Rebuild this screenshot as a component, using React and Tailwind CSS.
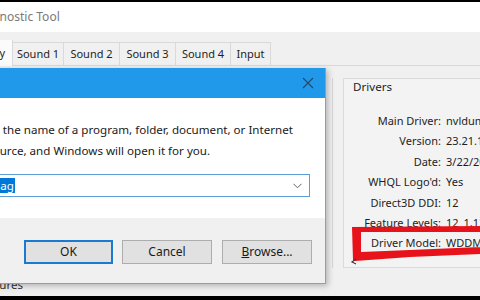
import React from "react";

const rows = [
  ["Main Driver:", "nvldumdx.dll"],
  ["Version:", "23.21.13.9124"],
  ["Date:", "3/22/2018"],
  ["WHQL Logo'd:", "Yes"],
  ["Direct3D DDI:", "12"],
  ["Feature Levels:", "12_1,12_0"],
  ["Driver Model:", "WDDM 2.3"],
];

const tabs = [
  ["Sound 1", "w-[51px]"],
  ["Sound 2", "w-[56px]"],
  ["Sound 3", "w-[56px]"],
  ["Sound 4", "w-[55px]"],
  ["Input", "w-[40px]"],
];

function RunDialog() {
  return (
    <div className="absolute top-[68px] left-[-60px] w-[386px] h-[216px] flex flex-col border-r border-b border-[#6aa9e0] shadow-[2px_2px_6px_rgba(0,0,0,0.25)] bg-white">
      <div className="h-[30px] bg-[#2199ea] flex items-center justify-end pr-[11px] shrink-0">
        <svg width="12" height="12" viewBox="0 0 12 12">
          <path d="M1 1 L11 11 M11 1 L1 11" stroke="#244868" strokeWidth="1.1" fill="none" />
        </svg>
      </div>
      <div className="h-[120px] bg-white shrink-0 pt-[21px] pl-[36px] text-[11.6px] leading-[21px] text-[#1a1a1a] whitespace-nowrap">
        <p className="ml-[-2px]">Type the name of a program, folder, document, or Internet</p>
        <p>resource, and Windows will open it for you.</p>
        <div className="mt-[13px] w-[330px] ml-[4px] h-[23px] border border-[#5e9fda] flex items-center justify-between pr-[7px]">
          <span className="ml-[-5px] bg-[#0078d7] text-white leading-[15px] px-[1px]">dxdiag</span>
          <svg width="9" height="6" viewBox="0 0 9 6">
            <path d="M0.5 0.8 L4.5 4.8 L8.5 0.8" stroke="#606060" strokeWidth="1" fill="none" />
          </svg>
        </div>
      </div>
      <div className="flex-1 bg-[#f0f0f0] flex items-start justify-end pr-[13px] pt-[22px] gap-[9px] text-[12px] text-[#1a1a1a]">
        <button className="w-[89px] h-[24px] bg-[#e1e1e1] border-2 border-[#1b7ad0]">OK</button>
        <button className="w-[90px] h-[24px] bg-[#e1e1e1] border border-[#adadad]">Cancel</button>
        <button className="w-[90px] h-[24px] bg-[#e1e1e1] border border-[#adadad] ml-[1px]">
          <span className="underline">B</span>rowse...
        </button>
      </div>
    </div>
  );
}

export default function App() {
  return (
    <div
      className="relative w-[480px] h-[300px] overflow-hidden bg-[#f0f0f0] flex flex-col"
      style={{ fontFamily: '"Noto Sans", sans-serif' }}
    >
      <div className="h-[2px] bg-black shrink-0" />
      <div className="h-[30px] bg-white shrink-0 flex items-center whitespace-nowrap">
        <span className="text-[12px] text-[#7a7a7a] ml-[-70px]">DirectX Diagnostic Tool</span>
      </div>

      <div className="h-[34px] shrink-0 flex items-end border-b border-[#d9d9d9] text-[11px] text-[#1e1e1e] whitespace-nowrap">
        <div className="w-[13px] h-[26px] mb-[-1px] bg-[#fbfbfb] border-r border-[#d9d9d9] flex items-center justify-end pr-[7px] overflow-hidden">
          Display
        </div>
        {tabs.map(([t, w]) => (
          <div key={t} className={`${w} h-[23px] border-t border-r border-[#d9d9d9] flex items-center justify-center`}>
            {t}
          </div>
        ))}
      </div>

      <div className="flex-1 flex text-[11px] text-[#1e1e1e] whitespace-nowrap min-h-0">
        <div className="w-[333px] shrink-0 flex flex-col">
          <div className="mt-[12px] h-[190px] border-r border-[#d6d6d6]" />
          <div className="mt-[8px] ml-[-24px] text-[11.6px] text-[#333]">Features</div>
        </div>
        <div className="ml-[10px] mt-[12px] h-[190px] flex-1 min-w-0 overflow-hidden border-l border-t border-b border-[#dadada] bg-[#f3f3f3] flex flex-col">
          <div className="pl-[9px] leading-[14px] pt-[1px] text-[11.6px]">Drivers</div>
          <div className="mt-[17px] flex flex-col">
            {rows.map(([k, v]) => (
              <div key={k} className="h-[20.4px] flex items-center">
                <span className="w-[97px] shrink-0 text-right">{k}</span>
                <span className="ml-[5px]">{v}</span>
              </div>
            ))}
          </div>
        </div>
      </div>

      <div className="h-[4px] bg-black shrink-0" />

      <RunDialog />

      {/* red marker around Driver Model */}
      <svg className="absolute left-[350px] top-[224px] z-10" width="130" height="42" viewBox="0 0 130 42">
        <path
          fillRule="evenodd"
          fill="#e8121a"
          d="M2 3 L130 2 L130 30 L60 33 L5 37 L3 36 Z M11 8 L130 8 L130 23 L60 26 L11 28 Z"
        />
        <path d="M6 35 L2 38 L6 40" stroke="#5a3030" strokeWidth="1.2" fill="none" />
      </svg>
    </div>
  );
}
